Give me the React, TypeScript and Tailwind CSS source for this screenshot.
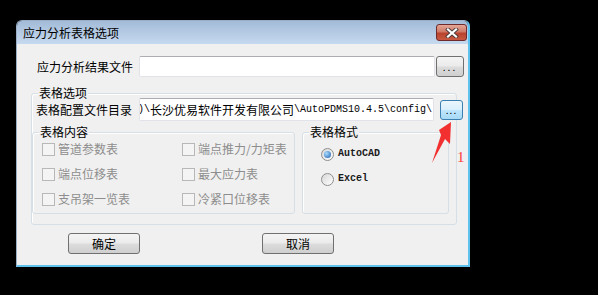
import React from "react";

const cjk = "font-['Noto_Sans_CJK_SC',sans-serif]";
const btnGray =
  "bg-[linear-gradient(to_bottom,#f4f4f4_0%,#ebebeb_48%,#dcdcdc_52%,#cfcfcf_100%)] border border-[#707070] rounded-[3px]";

const Check = ({ label }: { label: string }) => (
  <div className="flex items-center h-[16px]">
    <span className="shrink-0 w-[13px] h-[13px] border border-[#b8b8b8] bg-[#f4f4f4]" />
    <span className="ml-[3px] text-[#8d8d8d] whitespace-nowrap">{label}</span>
  </div>
);

const Radio = ({ label, on }: { label: string; on?: boolean }) => (
  <div className="flex items-center h-[16px]">
    <span className="shrink-0 w-[13px] h-[13px] rounded-full border border-[#8e8f8f] bg-[linear-gradient(135deg,#d6d6d6,#ffffff)] flex items-center justify-center">
      {on && (
        <span className="w-[7px] h-[7px] rounded-full bg-[radial-gradient(circle_at_35%_35%,#a8dcff,#1d5fae)]" />
      )}
    </span>
    <span className="ml-[4px] font-['Liberation_Mono',monospace] text-[10px] font-bold text-[#1a1a1a]">
      {label}
    </span>
  </div>
);

const Group = ({
  title,
  className,
  children,
}: {
  title: string;
  className: string;
  children?: React.ReactNode;
}) => (
  <div className={"relative shrink-0 border border-[#d5dfe5] rounded-[3px] shadow-[inset_1px_1px_0_#ffffff] " + className}>
    <span className="absolute left-[6px] -top-[8px] px-[1px] bg-[#f0f0f0] leading-[14px] text-black whitespace-nowrap">
      {title}
    </span>
    {children}
  </div>
);

export default function App() {
  return (
    <div className={"relative w-[598px] h-[295px] bg-black overflow-hidden text-[12px] leading-[14px] " + cjk}>
      <div className="ml-[16px] pt-[20px]">
        <div className="w-[454px] h-[247px] flex flex-col rounded-t-[6px] border border-[#9aaec6] border-r-[2px] border-r-[#5fc2ec] border-b-[2px] border-b-[#5fc2ec] overflow-hidden">
          {/* title bar */}
          <div className="h-[23px] flex items-start justify-between bg-[linear-gradient(to_bottom,#a3bbd8,#c6d9ef)]">
            <span className="pl-[6px] pt-[5px] text-black">应力分析表格选项</span>
            <div className="mt-[3px] mr-[1px] w-[31px] h-[17px] rounded-[3px] border border-[#6f2b2b] bg-[linear-gradient(to_bottom,#e4a798_0%,#d07a66_45%,#b9432e_55%,#c85a40_100%)] flex items-center justify-center">
              <svg width="14" height="10" viewBox="0 0 14 10">
                <path d="M3 1.5 L11 8.5 M11 1.5 L3 8.5" stroke="#4a3a3a" strokeWidth="4" strokeLinecap="square" />
                <path d="M3 1.5 L11 8.5 M11 1.5 L3 8.5" stroke="#ffffff" strokeWidth="2.2" strokeLinecap="square" />
              </svg>
            </div>
          </div>

          {/* body */}
          <div className="flex-1 bg-[#f0f0f0] flex flex-col">
            <div className="mt-[12px] pl-[20px] flex items-center h-[21px]">
              <span className="shrink-0 w-[102px] text-black whitespace-nowrap">应力分析结果文件</span>
              <div className="shrink-0 w-[296px] h-[21px] bg-white border border-[#e2e3ea] border-t-[#abadb3] rounded-[2px]" />
              <div className={"shrink-0 ml-[1px] w-[28px] h-[21px] flex items-center justify-center text-[10px] tracking-[2px] " + btnGray}>
                ...
              </div>
            </div>

            <Group title="表格选项" className="mt-[16px] ml-[14px] w-[426px] h-[132px] flex flex-col">
              <div className="mt-[4px] pl-[4px] flex items-center">
                <span className="shrink-0 w-[103px] text-black whitespace-nowrap">表格配置文件目录</span>
                <div className="shrink-0 w-[295px] h-[23px] bg-white border border-[#e2e3ea] border-t-[#abadb3] rounded-[2px] flex items-center justify-end overflow-hidden whitespace-nowrap pr-[1px]">
                  <span className="shrink-0 font-['Liberation_Mono',monospace] text-[10px]">)\</span>
                  <span className="shrink-0 text-black">长沙优易软件开发有限公司</span>
                  <span className="shrink-0 font-['Liberation_Mono',monospace] text-[10px]">\AutoPDMS10.4.5\config\</span>
                </div>
                <div className="shrink-0 ml-[6px] w-[23px] h-[20px] rounded-[3px] border border-[#3c7fb1] bg-[linear-gradient(to_bottom,#eaf6fd_0%,#d9f0fc_48%,#bee6fd_52%,#a7d9f5_100%)] flex items-center justify-center text-[10px] tracking-[1px]">
                  ...
                </div>
              </div>

              <div className="mt-[11px] flex gap-[7px]">
                <Group title="表格内容" className="w-[263px] h-[82px]">
                  <div className="pl-[9px] pt-[8px] grid grid-cols-[140px_1fr] gap-y-[9px]">
                    <Check label="管道参数表" />
                    <Check label="端点推力/力矩表" />
                    <Check label="端点位移表" />
                    <Check label="最大应力表" />
                    <Check label="支吊架一览表" />
                    <Check label="冷紧口位移表" />
                  </div>
                </Group>
                <Group title="表格格式" className="w-[147px] h-[82px]">
                  <div className="pl-[18px] pt-[13px] flex flex-col gap-[9px]">
                    <Radio label="AutoCAD" on />
                    <Radio label="Excel" />
                  </div>
                </Group>
              </div>
            </Group>

            <div className="mt-[8px] pl-[51px] flex gap-[122px]">
              <div className={"w-[72px] h-[21px] flex items-center justify-center text-black " + btnGray}>确定</div>
              <div className={"w-[72px] h-[21px] flex items-center justify-center text-black " + btnGray}>取消</div>
            </div>
          </div>
        </div>
      </div>

      {/* annotation */}
      <svg className="absolute left-0 top-0" width="598" height="295" viewBox="0 0 598 295">
        <polygon points="451,122 450,144 445,139 432,163 441,135 439,130" fill="#f23030" />
      </svg>
      <span className="absolute left-[457px] top-[149px] font-['Liberation_Serif',serif] text-[15px] leading-[16px] text-[#ff3b3b]">
        1
      </span>
    </div>
  );
}
